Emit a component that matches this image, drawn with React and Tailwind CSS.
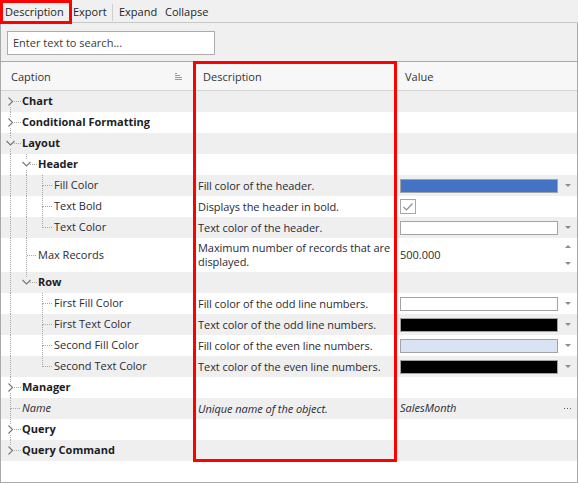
import React from "react";

const DOT = "#a8a8a8";

// Dotted tree guides, one 16px column per ancestor level
function Pipe({ h }) {
  return (
    <svg width="16" height={h} className="flex-none" shapeRendering="crispEdges">
      <line x1="8.5" y1="0" x2="8.5" y2={h} stroke={DOT} strokeDasharray="1 1" />
    </svg>
  );
}

function NodeMark({ h, pos, chevron }) {
  const m = Math.floor(h / 2) + 0.5;
  const gap = chevron ? 5 : 0;
  return (
    <svg width="20" height={h} className="flex-none" shapeRendering="crispEdges">
      {pos !== "first" && (
        <line x1="8.5" y1="0" x2="8.5" y2={m - gap} stroke={DOT} strokeDasharray="1 1" />
      )}
      {pos !== "last" && (
        <line x1="8.5" y1={m + gap} x2="8.5" y2={h} stroke={DOT} strokeDasharray="1 1" />
      )}
      <line x1={chevron ? 12 : 9} y1={m} x2="19" y2={m} stroke={DOT} strokeDasharray="1 1" />
      {chevron === "right" && (
        <polyline
          points={`6.5,${m - 4} 10.5,${m} 6.5,${m + 4}`}
          fill="none"
          stroke="#777"
          strokeWidth="1.1"
          shapeRendering="geometricPrecision"
        />
      )}
      {chevron === "down" && (
        <polyline
          points={`4.5,${m - 2.5} 8.5,${m + 1.5} 12.5,${m - 2.5}`}
          fill="none"
          stroke="#777"
          strokeWidth="1.1"
          shapeRendering="geometricPrecision"
        />
      )}
    </svg>
  );
}

function DropArrow() {
  return (
    <svg width="6" height="3" viewBox="0 0 6 3">
      <polygon points="0,0 6,0 3,3" fill="#8c8c8c" />
    </svg>
  );
}

function UpArrow() {
  return (
    <svg width="6" height="3" viewBox="0 0 6 3">
      <polygon points="0,3 6,3 3,0" fill="#8c8c8c" />
    </svg>
  );
}

function ColorValue({ color }) {
  return (
    <div className="flex h-full items-center">
      <div className="h-[14px] w-[158px] flex-none border border-[#a3a3a3]" style={{ background: color }} />
      <div className="flex flex-1 justify-center pl-[1px]">
        <DropArrow />
      </div>
    </div>
  );
}

function CheckValue() {
  return (
    <div className="flex h-full items-center">
      <div className="flex h-[15px] w-[16px] items-center justify-center border border-[#a8a8a8] bg-white">
        <svg width="12" height="10" viewBox="0 0 12 10">
          <polyline points="1.5,5 4.5,8 10.5,1.5" fill="none" stroke="#8e8e8e" strokeWidth="1.2" />
        </svg>
      </div>
    </div>
  );
}

function SpinValue({ text }) {
  return (
    <div className="flex h-full items-center">
      <span className="flex-1">{text}</span>
      <div className="flex w-[19px] flex-col items-center gap-[14px] pl-[1px]">
        <UpArrow />
        <DropArrow />
      </div>
    </div>
  );
}

function EllipsisValue({ text }) {
  return (
    <div className="flex h-full items-center">
      <span className="flex-1 italic">{text}</span>
      <div className="flex w-[19px] justify-center">
        <svg width="8" height="2" viewBox="0 0 8 2" shapeRendering="crispEdges">
          <rect x="0" y="0" width="1" height="1" fill="#5a5a5a" />
          <rect x="3" y="0" width="1" height="1" fill="#5a5a5a" />
          <rect x="6" y="0" width="1" height="1" fill="#5a5a5a" />
        </svg>
      </div>
    </div>
  );
}

const rows = [
  { cap: "Chart", guides: [], pos: "first", chev: "right", bold: true },
  { cap: "Conditional Formatting", guides: [], pos: "mid", chev: "right", bold: true },
  { cap: "Layout", guides: [], pos: "mid", chev: "down", bold: true },
  { cap: "Header", guides: ["pipe"], pos: "mid", chev: "down", bold: true },
  {
    cap: "Fill Color",
    guides: ["pipe", "pipe"],
    pos: "mid",
    desc: "Fill color of the header.",
    value: <ColorValue color="#4472c4" />,
  },
  {
    cap: "Text Bold",
    guides: ["pipe", "pipe"],
    pos: "mid",
    desc: "Displays the header in bold.",
    value: <CheckValue />,
  },
  {
    cap: "Text Color",
    guides: ["pipe", "pipe"],
    pos: "last",
    desc: "Text color of the header.",
    value: <ColorValue color="#ffffff" />,
  },
  {
    cap: "Max Records",
    guides: ["pipe"],
    pos: "mid",
    h: 34,
    desc: (
      <>
        Maximum number of records that are
        <br />
        displayed.
      </>
    ),
    value: <SpinValue text="500.000" />,
  },
  { cap: "Row", guides: ["pipe"], pos: "last", chev: "down", bold: true },
  {
    cap: "First Fill Color",
    guides: ["pipe", "blank"],
    pos: "mid",
    desc: "Fill color of the odd line numbers.",
    value: <ColorValue color="#ffffff" />,
  },
  {
    cap: "First Text Color",
    guides: ["pipe", "blank"],
    pos: "mid",
    desc: "Text color of the odd line numbers.",
    value: <ColorValue color="#000000" />,
  },
  {
    cap: "Second Fill Color",
    guides: ["pipe", "blank"],
    pos: "mid",
    desc: "Fill color of the even line numbers.",
    value: <ColorValue color="#dae3f3" />,
  },
  {
    cap: "Second Text Color",
    guides: ["pipe", "blank"],
    pos: "last",
    desc: "Text color of the even line numbers.",
    value: <ColorValue color="#000000" />,
  },
  { cap: "Manager", guides: [], pos: "mid", chev: "right", bold: true },
  {
    cap: "Name",
    guides: [],
    pos: "mid",
    italic: true,
    desc: "Unique name of the object.",
    value: <EllipsisValue text="SalesMonth" />,
  },
  { cap: "Query", guides: [], pos: "mid", chev: "right", bold: true },
  { cap: "Query Command", guides: [], pos: "last", chev: "right", bold: true },
];

function GridRow({ row, index }) {
  const h = row.h || 21;
  const stripe = index % 2 === 0 ? "bg-[#efefef]" : "bg-white";
  return (
    <div className={`flex ${stripe}`} style={{ height: h }}>
      <div className="flex w-[193px] flex-none items-center pl-[1px]">
        {row.guides.map((g, i) =>
          g === "pipe" ? <Pipe key={i} h={h} /> : <div key={i} className="w-4 flex-none" />
        )}
        <NodeMark h={h} pos={row.pos} chevron={row.chev} />
        <span
          className={`whitespace-nowrap ${row.bold ? "font-bold text-[#1c1c24]" : "text-[#2a2a33]"} ${
            row.italic ? "italic" : ""
          }`}
        >
          {row.cap}
        </span>
      </div>
      <div
        className={`flex w-[202px] flex-none items-center whitespace-nowrap pl-[4px] leading-[14px] text-[#2a2a33] ${
          row.italic ? "italic" : ""
        }`}
      >
        <span className="tracking-[-0.05px]">{row.desc}</span>
      </div>
      <div className="flex-1 pl-[4px] text-[#2a2a33]">{row.value && <div className="h-full">{row.value}</div>}</div>
    </div>
  );
}

export default function App() {
  return (
    <div className="relative h-[483px] w-[578px] overflow-hidden bg-[#f0f0f0] font-['Open_Sans',sans-serif] text-[11px] text-[#222]">
      {/* toolbar */}
      <div className="flex h-[23px] items-center border-b border-[#c8c8c8] pt-[2px] text-[#1e1e1e]">
        <div className="w-[68px] pl-[5px]">Description</div>
        <div className="w-[44px] pl-[5px]">Export</div>
        <div className="h-[17px] w-px bg-[#cfcfcf]" />
        <div className="w-[46px] pl-[6px]">Expand</div>
        <div className="pl-[6px]">Collapse</div>
      </div>

      {/* framed area: search + property grid */}
      <div className="flex h-[460px] flex-col border-x border-b border-[#a9a9a9]">
        <div className="h-[38px] pl-[6px] pt-[8px]">
          <div className="flex h-[24px] w-[208px] items-center border border-[#acacac] bg-white pl-[5px] text-[#3a3a3a]">
            Enter text to search...
          </div>
        </div>

        {/* column headers */}
        <div className="flex h-[30px] border-y border-t-[#a9a9a9] border-b-[#d4d4d4] bg-[#f7f7f7] pt-[3px] text-[#333]">
          <div className="flex w-[193px] flex-none items-center justify-between border-r border-[#d4d4d4] pl-[10px] pr-[10px]">
            <span>Caption</span>
            <svg width="8" height="8" viewBox="0 0 8 8" shapeRendering="crispEdges" className="-mt-[2px]">
              <rect x="0" y="0" width="2" height="1" fill="#9a9a9a" />
              <rect x="0" y="2" width="5" height="1" fill="#9a9a9a" />
              <rect x="0" y="4" width="7" height="1" fill="#9a9a9a" />
              <rect x="0" y="6" width="7" height="1" fill="#9a9a9a" />
            </svg>
          </div>
          <div className="flex w-[202px] flex-none items-center border-r border-[#d4d4d4] pl-[9px]">Description</div>
          <div className="flex flex-1 items-center pl-[9px]">Value</div>
        </div>

        {/* property rows */}
        <div className="flex-1 bg-white">
          {rows.map((r, i) => (
            <GridRow key={r.cap} row={r} index={i} />
          ))}
        </div>
      </div>

      {/* highlight frames */}
      <div className="pointer-events-none absolute left-0 top-0 h-[24px] w-[72px] border-[3px] border-[#ff0000]" />
      <div className="pointer-events-none absolute left-[193px] top-[61px] h-[401px] w-[204px] border-[3px] border-[#ff0000]" />
    </div>
  );
}
